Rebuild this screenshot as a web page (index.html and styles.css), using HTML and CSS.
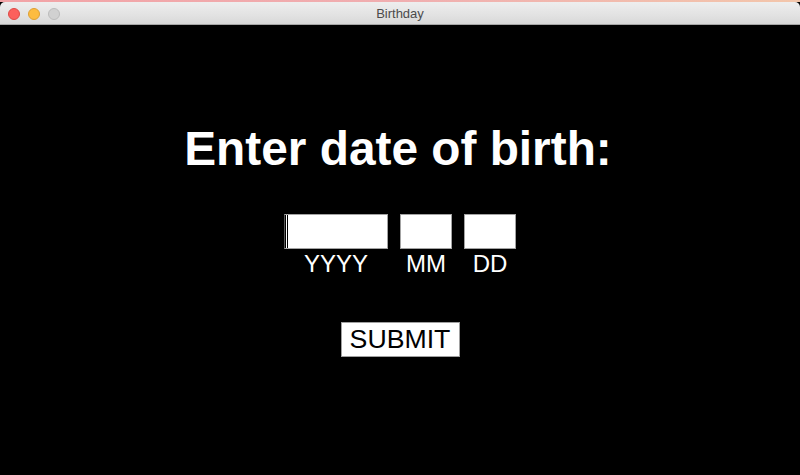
FILE: index.html
```html
<!DOCTYPE html>
<html lang="en">
<head>
<meta charset="utf-8">
<title>Birthday</title>
<link rel="stylesheet" href="styles.css">
</head>
<body>
<div class="window">
  <div class="desk-strip"></div>
  <header class="titlebar">
    <div class="lights">
      <span class="light light-close"></span>
      <span class="light light-min"></span>
      <span class="light light-max"></span>
    </div>
    <div class="title">Birthday</div>
    <div class="spacer"></div>
  </header>
  <main class="content">
    <h1 class="heading">Enter date of birth:</h1>
    <div class="fields">
      <div class="field">
        <div class="box box-year"><span class="caret"></span></div>
        <div class="label">YYYY</div>
      </div>
      <div class="field">
        <div class="box box-small"></div>
        <div class="label">MM</div>
      </div>
      <div class="field">
        <div class="box box-small"></div>
        <div class="label">DD</div>
      </div>
    </div>
    <button class="submit" type="button">SUBMIT</button>
  </main>
</div>
</body>
</html>
```

FILE: styles.css
```css
* { box-sizing: border-box; }

html, body {
  margin: 0;
  padding: 0;
  width: 800px;
  height: 475px;
  overflow: hidden;
  background: #000;
}

.window {
  width: 800px;
  height: 475px;
  display: flex;
  flex-direction: column;
  background: #000;
  font-family: "Liberation Sans", Arial, sans-serif;
}

.desk-strip {
  height: 2px;
  flex: none;
  background: linear-gradient(to right, #f2a3a6 0%, #f0aeb0 50%, #f3c6ab 100%);
}

.titlebar {
  flex: none;
  height: 23px;
  padding-top: 2px;
  display: grid;
  grid-template-columns: 1fr auto 1fr;
  align-items: center;
  background: linear-gradient(to bottom, #eeeeee 0%, #e2e2e2 60%, #d8d8d8 100%);
  border-bottom: 1px solid #a6a6a6;
  border-radius: 5px 5px 0 0;
}

.lights {
  display: flex;
  gap: 8px;
  padding-left: 8px;
}

.light {
  width: 12px;
  height: 12px;
  border-radius: 50%;
  display: block;
}

.light-close { background: #fc605c; border: 0.5px solid #de4a46; }
.light-min { background: #fdbc40; border: 0.5px solid #dea034; }
.light-max { background: #d1d1d1; border: 0.5px solid #bcbcbc; }

.title {
  font-size: 13px;
  color: #4b4b4b;
  line-height: 16px;
}

.content {
  flex: 1;
  display: flex;
  flex-direction: column;
  align-items: center;
  padding-top: 97px;
  color: #fff;
}

.heading {
  margin: 0 4px 0 0;
  font-size: 47.8px;
  line-height: 54px;
  font-weight: bold;
  color: #fff;
}

.fields {
  margin-top: 38px;
  display: flex;
  gap: 12px;
}

.field {
  display: flex;
  flex-direction: column;
  align-items: center;
}

.box {
  height: 35px;
  background: #fff;
  border: 1px solid #a3a3a3;
  display: flex;
  padding: 0 0 0 2px;
}

.box-year {
  width: 104px;
  border-left-color: #5a5a5a;
  box-shadow: inset 1px 0 0 #000;
}

.box-small { width: 52px; }

.caret {
  width: 1px;
  height: 100%;
  background: #000;
}

.label {
  margin-top: 2px;
  font-size: 24px;
  line-height: 26px;
  color: #fff;
}

.submit {
  margin-top: 45px;
  width: 119px;
  height: 35px;
  padding: 0;
  background: #fff;
  border: 1px solid #a0a0a0;
  border-radius: 0;
  color: #000;
  font-family: "Liberation Sans", Arial, sans-serif;
  font-size: 26.7px;
  line-height: 33px;
}
```
